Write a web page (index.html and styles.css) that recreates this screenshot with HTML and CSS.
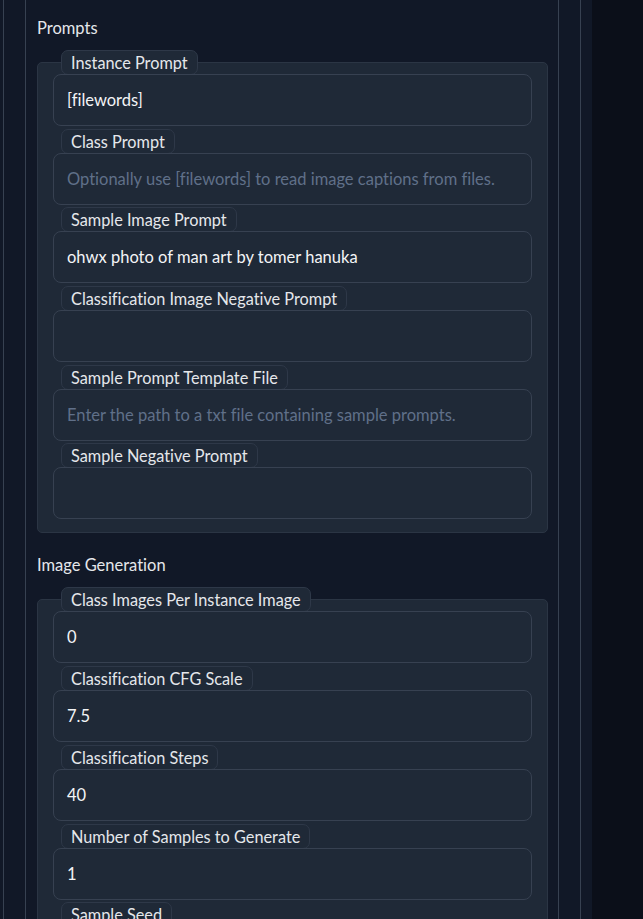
FILE: index.html
```html
<!DOCTYPE html>
<html lang="en">
<head>
<meta charset="utf-8">
<title>Prompts</title>
<link rel="stylesheet" href="styles.css">
</head>
<body>
<div class="page">
  <div class="main">
    <div class="outer">
      <div class="inner">
        <section class="section">
          <div class="heading">Prompts</div>
          <div class="panel">
            <div class="field">
              <span class="badge">Instance Prompt</span>
              <div class="input">[filewords]</div>
            </div>
            <div class="field">
              <span class="badge">Class Prompt</span>
              <div class="input placeholder">Optionally use [filewords] to read image captions from files.</div>
            </div>
            <div class="field">
              <span class="badge">Sample Image Prompt</span>
              <div class="input">ohwx photo of man art by tomer hanuka</div>
            </div>
            <div class="field">
              <span class="badge">Classification Image Negative Prompt</span>
              <div class="input"></div>
            </div>
            <div class="field">
              <span class="badge">Sample Prompt Template File</span>
              <div class="input placeholder">Enter the path to a txt file containing sample prompts.</div>
            </div>
            <div class="field">
              <span class="badge">Sample Negative Prompt</span>
              <div class="input"></div>
            </div>
          </div>
        </section>
        <section class="section">
          <div class="heading">Image Generation</div>
          <div class="panel">
            <div class="field">
              <span class="badge">Class Images Per Instance Image</span>
              <div class="input">0</div>
            </div>
            <div class="field">
              <span class="badge">Classification CFG Scale</span>
              <div class="input">7.5</div>
            </div>
            <div class="field">
              <span class="badge">Classification Steps</span>
              <div class="input">40</div>
            </div>
            <div class="field">
              <span class="badge">Number of Samples to Generate</span>
              <div class="input">1</div>
            </div>
            <div class="field">
              <span class="badge">Sample Seed</span>
              <div class="input">-1</div>
            </div>
          </div>
        </section>
      </div>
    </div>
  </div>
  <div class="side"></div>
</div>
</body>
</html>
```
FILE: styles.css
```css
* { box-sizing: border-box; }
html, body { margin: 0; padding: 0; }
body {
  background: #0b0f19;
  font-family: "Lato", "Noto Sans", sans-serif;
  font-variant-ligatures: none;
  color: #e5e7eb;
  overflow: hidden;
}
.page {
  display: flex;
  height: 919px;
  overflow: hidden;
}
.main {
  width: 592px;
  flex: none;
  background: #111827;
  padding-left: 3px;
}
.side {
  flex: 1;
  background: #0b0f19;
}
.outer {
  width: 578px;
  height: 100%;
  border-left: 1px solid #374151;
  border-right: 1px solid #374151;
  padding: 0 21px;
}
.inner {
  height: 100%;
  border-left: 1px solid #374151;
  border-right: 1px solid #374151;
  padding: 16px 10px 0 11px;
  display: flex;
  flex-direction: column;
  gap: 20px;
}
.heading {
  font-size: 16.5px;
  line-height: 24px;
  color: #e5e7eb;
  margin-bottom: 22px;
}
.panel {
  background: #1f2937;
  border: 1px solid #2b3544;
  border-radius: 5px;
  padding: 0 15px 13px 15px;
  display: flex;
  flex-direction: column;
  gap: 2.7px;
}
.field {
  display: flex;
  flex-direction: column;
  align-items: flex-start;
}
.field:first-child { margin-top: -13px; }
.badge {
  margin-left: 8px;
  height: 25px;
  margin-bottom: -1px;
  padding: 0 9px;
  background: #1f2937;
  border: 1px solid #2e3848;
  border-radius: 7px;
  font-size: 16.3px;
  line-height: 23px;
  color: #e5e7eb;
  white-space: nowrap;
}
.input {
  width: 100%;
  height: 52px;
  background: #1f2937;
  border: 1px solid #374151;
  border-radius: 8px;
  padding: 0 13px;
  display: flex;
  align-items: center;
  font-size: 16.5px;
  color: #f3f4f6;
  white-space: nowrap;
}
.input.placeholder { color: #607089; }
```
